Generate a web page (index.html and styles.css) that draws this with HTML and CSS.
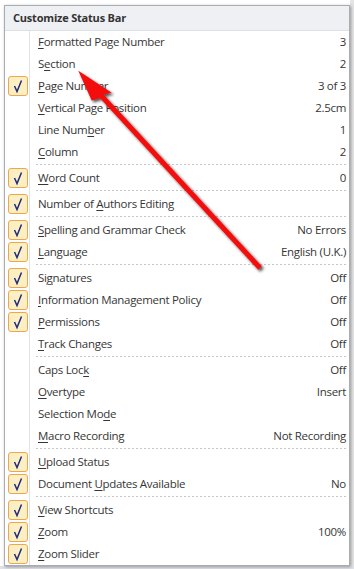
FILE: index.html
```html
<!DOCTYPE html>
<html>
<head>
<meta charset="utf-8">
<link rel="stylesheet" href="styles.css">
</head>
<body>
<div class="scene">
  <div class="menu">
    <div class="header">Customize Status Bar</div>
    <div class="list">
      <div class="row"><span class="gut"></span><span class="label"><u>F</u>ormatted Page Number</span><span class="val">3</span></div>
      <div class="row"><span class="gut"></span><span class="label">S<u>e</u>ction</span><span class="val">2</span></div>
      <div class="row"><span class="gut"><i class="chk"></i></span><span class="label"><u>P</u>age Number</span><span class="val">3 of 3</span></div>
      <div class="row"><span class="gut"></span><span class="label"><u>V</u>ertical Page Position</span><span class="val">2.5cm</span></div>
      <div class="row"><span class="gut"></span><span class="label">Line Num<u>b</u>er</span><span class="val">1</span></div>
      <div class="row"><span class="gut"></span><span class="label"><u>C</u>olumn</span><span class="val">2</span></div>
      <div class="sep"><span class="gut"></span><span class="dash"></span></div>
      <div class="row"><span class="gut"><i class="chk"></i></span><span class="label"><u>W</u>ord Count</span><span class="val">0</span></div>
      <div class="sep"><span class="gut"></span><span class="dash"></span></div>
      <div class="row"><span class="gut"><i class="chk"></i></span><span class="label">Number of <u>A</u>uthors Editing</span><span class="val"></span></div>
      <div class="sep"><span class="gut"></span><span class="dash"></span></div>
      <div class="row"><span class="gut"><i class="chk"></i></span><span class="label"><u>S</u>pelling and Grammar Check</span><span class="val">No Errors</span></div>
      <div class="row"><span class="gut"><i class="chk"></i></span><span class="label"><u>L</u>anguage</span><span class="val">English (U.K.)</span></div>
      <div class="sep"><span class="gut"></span><span class="dash"></span></div>
      <div class="row"><span class="gut"><i class="chk"></i></span><span class="label">Si<u>g</u>natures</span><span class="val">Off</span></div>
      <div class="row"><span class="gut"><i class="chk"></i></span><span class="label"><u>I</u>nformation Management Policy</span><span class="val">Off</span></div>
      <div class="row"><span class="gut"><i class="chk"></i></span><span class="label"><u>P</u>ermissions</span><span class="val">Off</span></div>
      <div class="row"><span class="gut"></span><span class="label"><u>T</u>rack Changes</span><span class="val">Off</span></div>
      <div class="sep"><span class="gut"></span><span class="dash"></span></div>
      <div class="row"><span class="gut"></span><span class="label">Caps Loc<u>k</u></span><span class="val">Off</span></div>
      <div class="row"><span class="gut"></span><span class="label"><u>O</u>vertype</span><span class="val">Insert</span></div>
      <div class="row"><span class="gut"></span><span class="label">Selection Mo<u>d</u>e</span><span class="val"></span></div>
      <div class="row"><span class="gut"></span><span class="label"><u>M</u>acro Recording</span><span class="val">Not Recording</span></div>
      <div class="sep"><span class="gut"></span><span class="dash"></span></div>
      <div class="row"><span class="gut"><i class="chk"></i></span><span class="label"><u>U</u>pload Status</span><span class="val"></span></div>
      <div class="row"><span class="gut"><i class="chk"></i></span><span class="label">Document <u>U</u>pdates Available</span><span class="val">No</span></div>
      <div class="sep"><span class="gut"></span><span class="dash"></span></div>
      <div class="row"><span class="gut"><i class="chk"></i></span><span class="label"><u>V</u>iew Shortcuts</span><span class="val"></span></div>
      <div class="row"><span class="gut"><i class="chk"></i></span><span class="label"><u>Z</u>oom</span><span class="val">100%</span></div>
      <div class="row"><span class="gut"><i class="chk"></i></span><span class="label"><u>Z</u>oom Slider</span><span class="val"></span></div>
    </div>
  </div>
  <svg class="arrow" width="354" height="569" viewBox="0 0 354 569">
    <defs>
      <filter id="sh" x="-20%" y="-20%" width="140%" height="140%">
        <feDropShadow dx="2" dy="2" stdDeviation="1.6" flood-color="#000" flood-opacity="0.7"/>
      </filter>
    </defs>
    <path filter="url(#sh)" fill="#f40a0a" d="M78.3 70.7 L111.7 92.7 L103.5 94.6 L261.8 266.3 L258.2 269.7 L99.9 98 L91.7 100.5 Z"/>
  </svg>
</div>
</body>
</html>
```
FILE: styles.css
```css
html, body {
  margin: 0;
  padding: 0;
}
body {
  width: 354px;
  height: 569px;
  overflow: hidden;
  background: linear-gradient(to bottom, transparent 0 566px, #dfe3e8 566px), linear-gradient(to right, #ffffff 0 350px, #e4e4e4 350px);
  font-family: "Open Sans", "Noto Sans", sans-serif;
  font-size: 11.5px;
  letter-spacing: -0.3px;
  color: #363636;
}
.scene {
  position: relative;
  width: 354px;
  height: 569px;
  padding: 5px 0 0 4px;
  box-sizing: border-box;
}
.menu {
  width: 346px;
  box-sizing: border-box;
  border: 1px solid #a9acb0;
  background: #fff;
  box-shadow: 1px 1px 3px rgba(0, 0, 0, 0.35);
}
.header {
  height: 23px;
  border-bottom: 1px solid #dcdfe4;
  background: #eff0f4;
  font-weight: bold;
  padding-left: 8px;
  padding-bottom: 1px;
  display: flex;
  align-items: center;
  color: #333;
  font-size: 11px;
  letter-spacing: -0.2px;
}
.row {
  display: grid;
  grid-template-columns: 25px 1fr auto;
  height: 22px;
  align-items: center;
}
.gut {
  height: 100%;
  border-right: 1px solid #e2e3e3;
  display: flex;
  align-items: center;
}
.label {
  padding-left: 8px;
  padding-bottom: 1px;
  white-space: nowrap;
}
.val {
  padding-right: 3px;
  padding-bottom: 1px;
  white-space: nowrap;
}
u {
  text-decoration-thickness: 1px;
  text-underline-offset: 2px;
}
.sep {
  display: grid;
  grid-template-columns: 25px 1fr;
  height: 4px;
}
.dash {
  margin: 1px 1px 0 6px;
  height: 1px;
  background: repeating-linear-gradient(to right, #c6c6c6 0 2px, transparent 2px 4px);
}
.chk {
  display: block;
  width: 18px;
  height: 18px;
  margin-left: 3px;
  border: 1px solid #f1a54a;
  border-radius: 3px;
  background: #fdefc4 url("data:image/svg+xml,%3Csvg xmlns='http://www.w3.org/2000/svg' width='18' height='18'%3E%3Cpath d='M5.5 9 L8 14.5 L12.5 3.5' fill='none' stroke='%23202c78' stroke-width='1.5'/%3E%3C/svg%3E") no-repeat center;
}
.arrow {
  position: absolute;
  left: 0;
  top: 0;
  pointer-events: none;
}
```
